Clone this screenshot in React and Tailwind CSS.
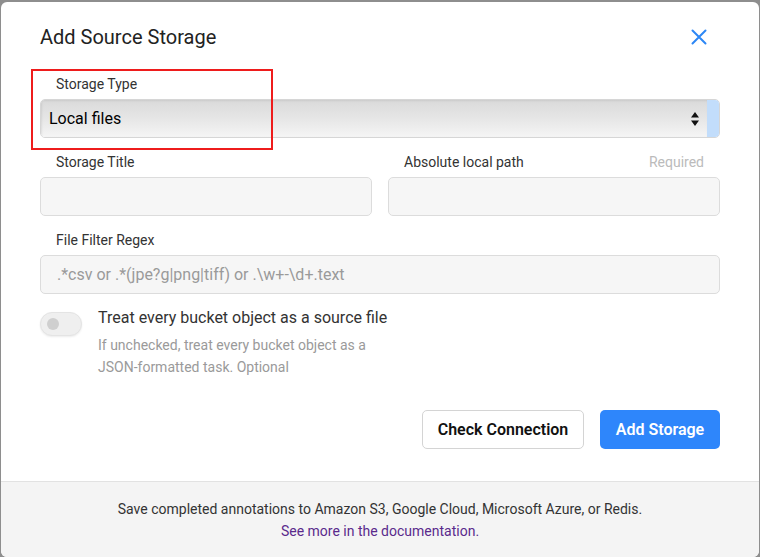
export default function App() {
  return (
    <div className="w-[760px] h-[557px] bg-[#8e8e8e] pt-[2px] pl-[1px] overflow-hidden" style={{ fontFamily: 'Roboto, "Liberation Sans", sans-serif' }}>
      <div className="relative w-[758px] h-[555px] bg-white rounded-[6px] flex flex-col overflow-hidden">
        {/* header */}
        <div className="flex items-center justify-between pl-[39px] pr-[52px] pt-[21px]">
          <h2 className="text-[20px] leading-[28px] text-[#222]">Add Source Storage</h2>
          <svg width="16" height="16" viewBox="0 0 16 16" className="text-[#2d87f5]">
            <path d="M1.5 1.5 L14.5 14.5 M14.5 1.5 L1.5 14.5" stroke="currentColor" strokeWidth="2" strokeLinecap="round" />
          </svg>
        </div>

        {/* body */}
        <div className="flex flex-col px-[39px] pt-[23px]">
          <label className="pl-4 text-[14px] leading-[20px] text-[#333]">Storage Type</label>
          <div className="mt-[5px] h-[39px] flex rounded-[5px] overflow-hidden border border-[#d6d6d6]">
            <div className="flex-1 flex items-center justify-between pl-[8px] pr-[8px] bg-gradient-to-b from-[#dadada] via-[#e6e6e6] to-[#f5f5f5] shadow-[inset_1px_1px_2px_rgba(0,0,0,0.08)]">
              <span className="text-[16px] text-black">Local files</span>
              <svg width="8" height="14" viewBox="0 0 8 14">
                <path d="M4 0 L8 5.5 L0 5.5 Z M4 14 L8 8.5 L0 8.5 Z" fill="#111" />
              </svg>
            </div>
            <div className="w-[12px] bg-[#c2ddfb]" />
          </div>

          <div className="mt-[14px] grid grid-cols-2 gap-x-4">
            <div className="flex flex-col">
              <label className="pl-4 text-[14px] leading-[20px] text-[#333]">Storage Title</label>
              <div className="mt-[5px] h-[39px] rounded-[5px] border border-[#dcdcdc] bg-[#f6f6f6]" />
            </div>
            <div className="flex flex-col">
              <div className="flex justify-between pl-4 pr-4 text-[14px] leading-[20px]">
                <label className="text-[#333]">Absolute local path</label>
                <span className="text-[#bbbbbb]">Required</span>
              </div>
              <div className="mt-[5px] h-[39px] rounded-[5px] border border-[#dcdcdc] bg-[#f6f6f6]" />
            </div>
          </div>

          <label className="mt-[14px] pl-4 text-[14px] leading-[20px] text-[#333]">File Filter Regex</label>
          <div className="mt-[5px] h-[39px] rounded-[5px] border border-[#dcdcdc] bg-[#f6f6f6] flex items-center pl-4">
            <span className="text-[16px] text-[#9a9a9a]">.*csv or .*(jpe?g|png|tiff) or .\w+-\d+.text</span>
          </div>

          <div className="mt-[13px] flex items-start gap-4">
            <div className="mt-[5px] w-[42px] h-[24px] rounded-full bg-[#efefef] border border-[#e4e4e4] shadow-[0_1px_2px_rgba(0,0,0,0.08)] flex items-center pl-[6px]">
              <div className="w-[12px] h-[12px] rounded-full bg-[#cfcfcf]" />
            </div>
            <div className="flex flex-col">
              <span className="text-[16px] leading-[22px] text-[#333]">Treat every bucket object as a source file</span>
              <span className="mt-[5px] w-[280px] text-[14px] leading-[22px] text-[#9a9a9a]">If unchecked, treat every bucket object as a JSON-formatted task. Optional</span>
            </div>
          </div>

          <div className="mt-[32px] flex justify-end gap-4">
            <button className="h-[39px] w-[162px] rounded-[5px] border border-[#d4d4d4] bg-white text-[16px] font-semibold text-[#111]">Check Connection</button>
            <button className="h-[39px] w-[120px] rounded-[5px] bg-[#2e86fb] text-[16px] font-semibold text-white">Add Storage</button>
          </div>
        </div>

        {/* footer */}
        <div className="mt-auto h-[76px] border-t border-[#e2e2e2] bg-[#f4f4f4] flex flex-col items-center pt-[16px]">
          <span className="text-[14px] leading-[22px] text-[#333]">Save completed annotations to Amazon S3, Google Cloud, Microsoft Azure, or Redis.</span>
          <span className="text-[14px] leading-[22px] text-[#5a2a8c]">See more in the documentation.</span>
        </div>

        {/* annotation box */}
        <div className="absolute left-[30px] top-[67px] w-[242px] h-[81px] border-2 border-[#ee1c1c]" />
      </div>
    </div>
  );
}
